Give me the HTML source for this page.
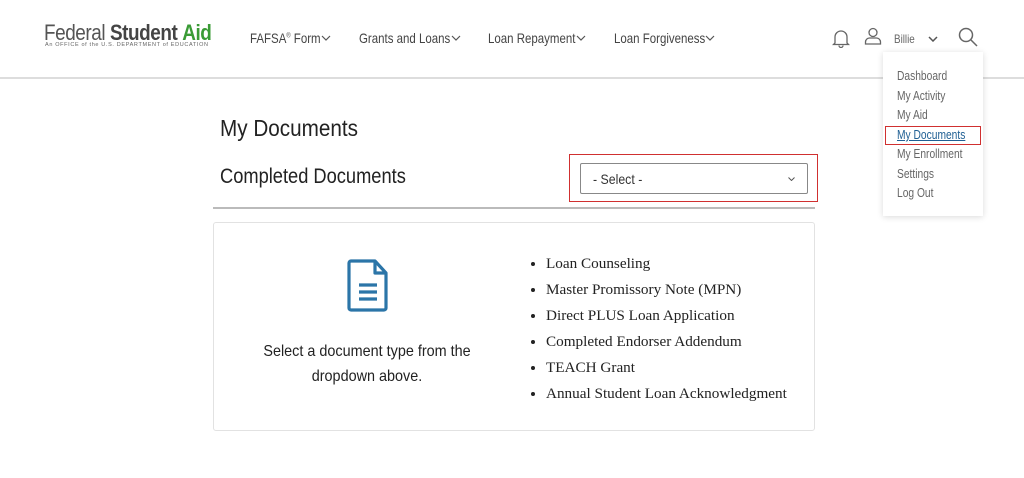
<!DOCTYPE html>
<html><head><style>
body{margin:0;width:1024px;height:478px;background:#fff;position:relative;overflow:hidden;font-family:"Liberation Sans",sans-serif;color:#222}
.a{position:absolute;white-space:nowrap}
.n{transform:scaleX(0.82);transform-origin:0 0}
.nav{font-size:14px;color:#444;top:30px}
.menu div{font-size:12.5px;color:#666;height:19.7px;line-height:19.7px}
.menu span{display:inline-block;transform:scaleX(0.82);transform-origin:0 0}
</style></head><body>
<div class="a n" style="left:44px;top:20px;font-size:22px;color:#555;letter-spacing:-0.5px;transform:scaleX(0.86)">Federal<b style="color:#444"> Student</b> <b style="color:#3a9b35">Aid</b></div>
<div class="a" style="left:45px;top:42px;font-size:5.5px;color:#666;letter-spacing:0.65px">An OFFICE of the U.S. DEPARTMENT of EDUCATION</div>
<div class="a nav n" style="left:250px">FAFSA<sup style="font-size:7px">®</sup> Form</div>
<div class="a nav n" style="left:359px">Grants and Loans</div>
<div class="a nav n" style="left:488px">Loan Repayment</div>
<div class="a nav n" style="left:614px">Loan Forgiveness</div>
<svg class="a" style="left:321px;top:35px" width="10" height="6" fill="none" stroke="#555" stroke-width="1.2"><path d="M1 1l4 4 4-4"/></svg>
<svg class="a" style="left:451px;top:35px" width="10" height="6" fill="none" stroke="#555" stroke-width="1.2"><path d="M1 1l4 4 4-4"/></svg>
<svg class="a" style="left:576px;top:35px" width="10" height="6" fill="none" stroke="#555" stroke-width="1.2"><path d="M1 1l4 4 4-4"/></svg>
<svg class="a" style="left:705px;top:35px" width="10" height="6" fill="none" stroke="#555" stroke-width="1.2"><path d="M1 1l4 4 4-4"/></svg>
<svg class="a" style="left:832px;top:28px" width="18" height="20" viewBox="0 0 18 20" fill="none" stroke="#666" stroke-width="1.3"><path d="M3 15V9a6 6 0 0112 0v6l1.5 1.5h-15z M7 17.5a2 2 0 004 0"/></svg>
<svg class="a" style="left:864px;top:27px" width="18" height="18" viewBox="0 0 18 18" fill="none" stroke="#666" stroke-width="1.3"><circle cx="9" cy="5.5" r="4"/><path d="M1.5 17v-2a4 4 0 014-4h7a4 4 0 014 4v2z"/></svg>
<div class="a n" style="left:894px;top:32px;font-size:12px;color:#666">Billie</div>
<svg class="a" style="left:928px;top:36px" width="10" height="6" fill="none" stroke="#555" stroke-width="1.5"><path d="M1 1l4 4 4-4"/></svg>
<svg class="a" style="left:958px;top:27px" width="20" height="20" viewBox="0 0 20 20" fill="none" stroke="#666" stroke-width="1.5"><circle cx="8" cy="8" r="6.5"/><path d="M13 13l6 6"/></svg>
<div class="a" style="left:0;top:77px;width:1024px;height:2px;background:#ddd"></div>
<div class="a menu" style="left:883px;top:52px;width:100px;height:164px;background:#fff;box-shadow:0 1px 6px rgba(0,0,0,.15);padding-top:15px;box-sizing:border-box">
<div style="padding-left:14px"><span>Dashboard</span></div><div style="padding-left:14px"><span>My Activity</span></div><div style="padding-left:14px"><span>My Aid</span></div>
<div style="margin:0 2px;padding-left:11px;border:1.5px solid #d03030;height:17px;line-height:17px;color:#1f5f93"><span style="text-decoration:underline">My Documents</span></div>
<div style="padding-left:14px"><span>My Enrollment</span></div><div style="padding-left:14px"><span>Settings</span></div><div style="padding-left:14px"><span>Log Out</span></div></div>
<div class="a n" style="left:220px;top:115px;font-size:23px;color:#222;transform:scaleX(0.9)">My Documents</div>
<div class="a n" style="left:220px;top:165px;font-size:21px;color:#222;transform:scaleX(0.87)">Completed Documents</div>
<div class="a" style="left:569px;top:154px;width:247px;height:46px;border:1.5px solid #d03030"></div>
<div class="a" style="left:580px;top:163px;width:228px;height:31px;border:1px solid #888;border-radius:2px;box-sizing:border-box"></div>
<div class="a n" style="left:593px;top:171px;font-size:14px;color:#333;transform:scaleX(0.88)">- Select -</div>
<svg class="a" style="left:788px;top:177px" width="7" height="4" fill="none" stroke="#555" stroke-width="1"><path d="M0.5 0.5l3 3 3-3"/></svg>
<div class="a" style="left:213px;top:207px;width:602px;height:1.5px;background:#bbb"></div>
<div class="a" style="left:213px;top:222px;width:600px;height:207px;border:1px solid #e2e2e2;border-radius:3px"></div>
<svg class="a" style="left:347px;top:259px" width="42" height="53" viewBox="0 0 42 53" fill="none" stroke="#2b75a8" stroke-width="3.2" stroke-linejoin="round"><path d="M4 2h24l11 12v35a2 2 0 01-2 2H4a2 2 0 01-2-2V4a2 2 0 012-2z M28 2v12h11"/><path d="M12 26h18M12 33h18M12 40h18"/></svg>
<div class="a" style="left:217px;top:339px;width:300px;text-align:center;font-size:16px;line-height:25px;color:#222;transform:scaleX(0.9);transform-origin:150px 0">Select a document type from the<br>dropdown above.</div>
<ul class="a" style="left:507px;top:251px;margin:0;padding-left:39px;font-family:'Liberation Serif',serif;font-size:15.2px;line-height:26px;color:#222">
<li>Loan Counseling</li><li>Master Promissory Note (MPN)</li><li>Direct PLUS Loan Application</li><li>Completed Endorser Addendum</li><li>TEACH Grant</li><li>Annual Student Loan Acknowledgment</li></ul>
</body></html>
